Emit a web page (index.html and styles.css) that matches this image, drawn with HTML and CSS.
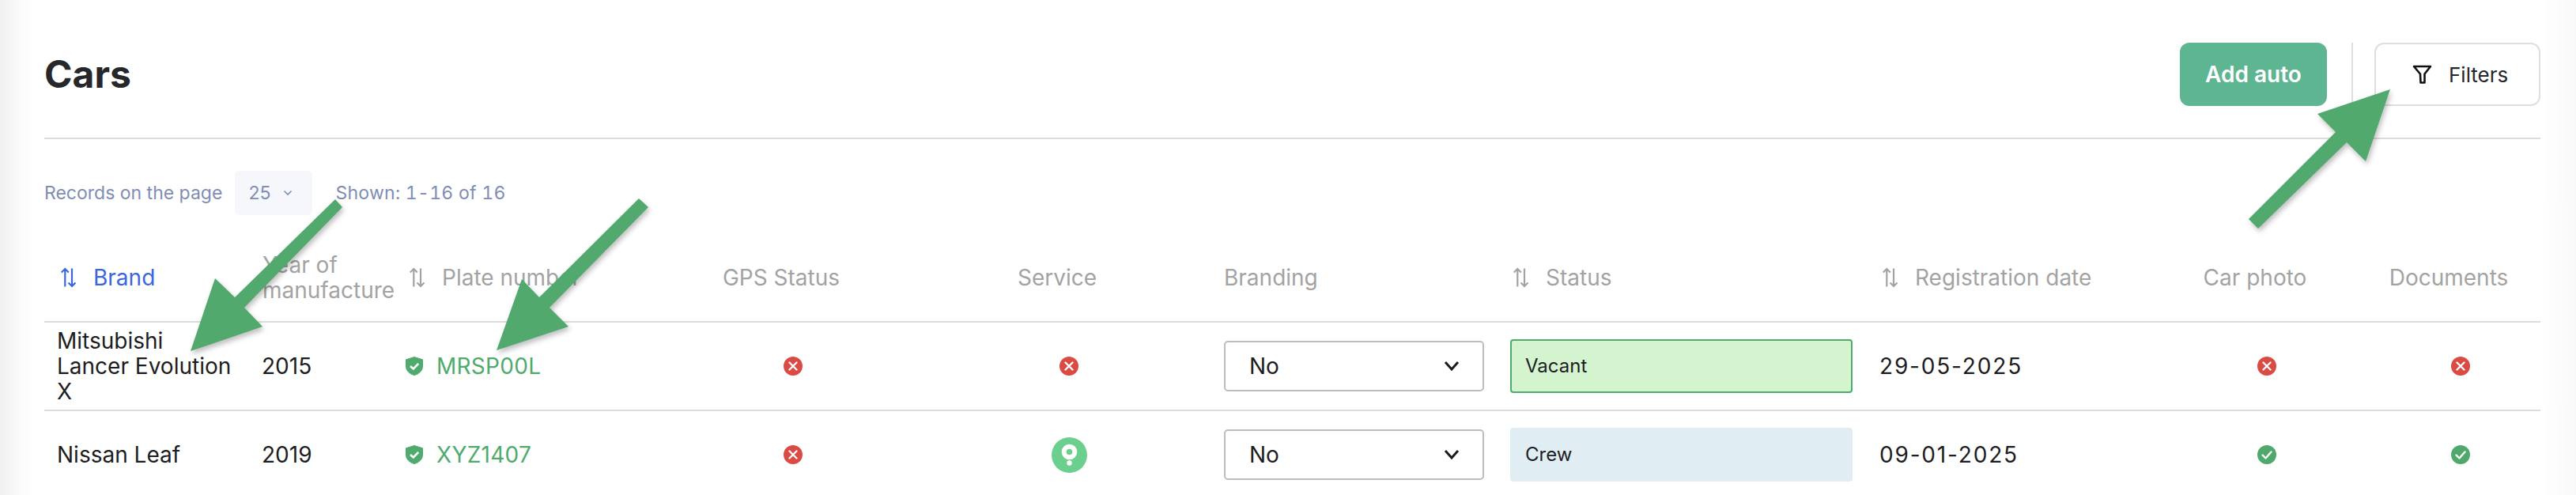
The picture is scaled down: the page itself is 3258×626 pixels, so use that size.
FILE: index.html
```html
<!DOCTYPE html>
<html lang="en">
<head>
<meta charset="utf-8">
<title>Cars</title>
<link rel="stylesheet" href="styles.css">
</head>
<body>
<svg width="0" height="0" class="defs">
  <symbol id="sort" viewBox="0 0 28 28"><path d="M9.300 25.500V3M4.800 7.500L9.300 3L13.800 7.500M18 2.500V25M13.500 20.500L18 25L22.500 20.500" fill="none" stroke="currentColor" stroke-width="2.200"/></symbol>
  <symbol id="no" viewBox="0 0 24 24"><circle cx="12" cy="12" r="12" fill="#d94b43"/><path d="M7.500 7.500L16.500 16.500M16.500 7.500L7.500 16.500" stroke="#fff" stroke-width="2.400" stroke-linecap="round"/></symbol>
  <symbol id="yes" viewBox="0 0 24 24"><circle cx="12" cy="12" r="12" fill="#4fa96c"/><path d="M6.500 12.500L10.500 16.500L17.500 8.500" fill="none" stroke="#fff" stroke-width="2.400" stroke-linecap="round" stroke-linejoin="round"/></symbol>
  <symbol id="shield" viewBox="0 0 22 24"><path d="M11 0L22 3.500V12C22 18 17 22 11 24C5 22 0 18 0 12V3.500Z" fill="#4fab6d"/><path d="M6 12L9.800 15.500L16.200 8.800" fill="none" stroke="#fff" stroke-width="2.600"/></symbol>
  <symbol id="chev" viewBox="0 0 20 14"><path d="M2 2L10 11L18 2" fill="none" stroke="#1d1d1d" stroke-width="3"/></symbol>
</svg>
<main class="page">
  <header class="topbar">
    <h1 class="title">Cars</h1>
    <div class="actions">
      <button class="btn-add">Add auto</button>
      <span class="divider"></span>
      <button class="btn-filter">
        <svg class="filter-icon" viewBox="0 0 25 24"><path d="M2 2H23L15.500 11.500V22.500H10.500L10 11.500Z" fill="none" stroke="#111" stroke-width="2.600" stroke-linejoin="round"/></svg>
        Filters
      </button>
    </div>
  </header>

  <div class="toolbar">
    <span>Records on the page</span>
    <div class="size-select">25
      <svg class="size-chev" viewBox="0 0 12 8"><path d="M1.500 1.500L6 6L10.500 1.500" fill="none" stroke="#7f8db5" stroke-width="1.600"/></svg>
    </div>
    <span class="shown">Shown: 1-16 of 16</span>
  </div>

  <table class="cars">
    <colgroup>
      <col class="c-brand"><col class="c-year"><col class="c-plate"><col class="c-gps"><col class="c-service"><col class="c-branding"><col class="c-status"><col class="c-date"><col class="c-photo"><col class="c-docs">
    </colgroup>
    <thead>
      <tr>
        <th class="active"><div class="sortable"><svg class="sort"><use href="#sort"/></svg>Brand</div></th>
        <th class="year">Year of manufacture</th>
        <th><div class="sortable"><svg class="sort"><use href="#sort"/></svg>Plate number</div></th>
        <th class="mid">GPS Status</th>
        <th class="mid">Service</th>
        <th>Branding</th>
        <th><div class="sortable"><svg class="sort"><use href="#sort"/></svg>Status</div></th>
        <th><div class="sortable"><svg class="sort"><use href="#sort"/></svg>Registration date</div></th>
        <th class="mid">Car photo</th>
        <th class="mid">Documents</th>
      </tr>
    </thead>
    <tbody>
      <tr>
        <td>Mitsubishi Lancer Evolution X</td>
        <td>2015</td>
        <td><div class="plate"><svg class="shield"><use href="#shield"/></svg>MRSP00L</div></td>
        <td class="ctr"><svg class="mark"><use href="#no"/></svg></td>
        <td class="ctr"><svg class="mark"><use href="#no"/></svg></td>
        <td><div class="select">No<svg class="chev"><use href="#chev"/></svg></div></td>
        <td><div class="status vacant">Vacant</div></td>
        <td class="date">29-05-2025</td>
        <td class="ctr"><svg class="mark"><use href="#no"/></svg></td>
        <td class="ctr"><svg class="mark"><use href="#no"/></svg></td>
      </tr>
      <tr>
        <td>Nissan Leaf</td>
        <td>2019</td>
        <td><div class="plate"><svg class="shield"><use href="#shield"/></svg>XYZ1407</div></td>
        <td class="ctr"><svg class="mark"><use href="#no"/></svg></td>
        <td class="ctr"><svg class="service-icon" viewBox="0 0 45 45"><circle cx="22.500" cy="22.500" r="22.500" fill="#6bcf8e"/><circle cx="22.500" cy="18.500" r="6.800" fill="none" stroke="#fff" stroke-width="6"/><circle cx="22.500" cy="32.500" r="3.200" fill="#fff"/></svg></td>
        <td><div class="select">No<svg class="chev"><use href="#chev"/></svg></div></td>
        <td><div class="status crew">Crew</div></td>
        <td class="date">09-01-2025</td>
        <td class="ctr"><svg class="mark"><use href="#yes"/></svg></td>
        <td class="ctr"><svg class="mark"><use href="#yes"/></svg></td>
      </tr>
    </tbody>
  </table>

  <svg class="arrows" viewBox="0 0 3258 626">
    <polygon points="424,252 433,262 309,389 332,413 241,444 272,352 297,376"/>
    <polygon points="808,251 820,262 695,389 719,413 628,443 660,353 682,376"/>
    <polygon points="2844,277 2856,289 2968,180 2992,204 3023,113 2931,144 2954,167"/>
  </svg>
</main>
</body>
</html>
```
FILE: styles.css
```css
* { box-sizing: border-box; }
html, body { margin: 0; height: 626px; overflow: hidden; }
body { font-family: Inter, "Liberation Sans", sans-serif; color: #202124; background: #fff; }
.defs { position: absolute; }

.page {
  position: relative;
  height: 626px;
  overflow: hidden;
  padding: 54px 45px 0 56px;
  background: linear-gradient(90deg, #f0f0f0 0, #fbfbfb 26px, #fff 44px, #fff calc(100% - 42px), #f8f8f8 100%);
}

.topbar {
  display: flex;
  align-items: center;
  justify-content: space-between;
  padding-bottom: 40px;
  border-bottom: 2px solid #dcdcdc;
}
.title { margin: 0; font-size: 48px; line-height: 60px; font-weight: 700; color: #25272b; }
.actions { display: flex; align-items: stretch; height: 80px; }
.btn-add {
  width: 186px;
  margin-right: 31px;
  border: 0;
  border-radius: 12px;
  background: #5eb592;
  color: #fff;
  font: 600 28px Inter, sans-serif;
}
.divider { width: 2px; margin-right: 27px; background: #dedede; }
.btn-filter {
  display: flex;
  align-items: center;
  gap: 21px;
  width: 210px;
  padding: 0 0 0 46px;
  border: 2px solid #dedede;
  border-radius: 12px;
  background: #fff;
  color: #25272b;
  font: 400 26px Inter, sans-serif;
}
.filter-icon { width: 25px; height: 24px; }

.toolbar {
  display: flex;
  align-items: center;
  gap: 16px;
  margin: 40px 0 24px;
  height: 56px;
  color: #7f8db5;
  font-size: 23px;
}
.shown { font-variant-numeric: tabular-nums; letter-spacing: 0.012em; }
.size-select {
  display: flex;
  align-items: center;
  gap: 16px;
  width: 98px;
  height: 56px;
  margin-right: 13px;
  padding-left: 17px;
  border-radius: 6px;
  background: #f6f7fb;
}
.size-chev { width: 12px; height: 8px; }

.cars { width: 3157px; table-layout: fixed; border-collapse: collapse; }
.c-brand { width: 259px; }
.c-year { width: 182px; }
.c-plate { width: 336px; }
.c-gps { width: 340px; }
.c-service { width: 358px; }
.c-branding { width: 362px; }
.c-status { width: 467px; }
.c-date { width: 363px; }
.c-photo { width: 288px; }
.c-docs { width: 202px; }

th {
  height: 111px;
  padding: 0 17px;
  border-bottom: 2px solid #dcdcdc;
  color: #a3a3a3;
  font-size: 28px;
  line-height: 32px;
  font-weight: 400;
  text-align: left;
}
th.year { padding-right: 0; }
th.mid { padding: 0 30px 0 0; text-align: center; }
th.active { color: #3b66e0; }
.sortable { display: flex; align-items: center; gap: 17px; white-space: nowrap; }
.sort { width: 28px; height: 28px; flex: none; }

td {
  height: 112px;
  padding: 0 16px;
  border-bottom: 2px solid #dcdcdc;
  font-size: 28px;
  line-height: 32px;
  color: #1d1d1f;
}
td.ctr { padding: 0; text-align: center; }
td.date { padding-left: 17px; letter-spacing: 0.065em; }
.mark { display: block; width: 24px; height: 24px; margin: 0 auto; }
.service-icon { display: block; width: 45px; height: 45px; margin: 0 auto; }

.plate { display: flex; align-items: center; gap: 17px; color: #4fab6d; letter-spacing: 0.01em; }
.shield { width: 22px; height: 24px; flex: none; }

.select {
  display: flex;
  align-items: center;
  justify-content: space-between;
  width: 329px;
  height: 64px;
  margin-left: 1px;
  padding: 0 29px 0 30px;
  border: 2px solid #bdbdbd;
  border-radius: 5px;
  background: #fff;
}
.chev { width: 20px; height: 14px; }
.status {
  display: flex;
  align-items: center;
  width: 433px;
  height: 68px;
  margin-left: 1px;
  padding: 0 19px;
  border-radius: 4px;
  font-size: 24px;
}
.vacant { background: #d3f4cf; border: 2px solid #4fab6d; padding-left: 17px; }
.crew { background: #e0eef4; }

.arrows { position: absolute; inset: 0; width: 3258px; height: 626px; pointer-events: none; }
.arrows polygon { fill: #52a96d; filter: drop-shadow(2px 4px 3px rgba(0, 0, 0, 0.25)); }
```
